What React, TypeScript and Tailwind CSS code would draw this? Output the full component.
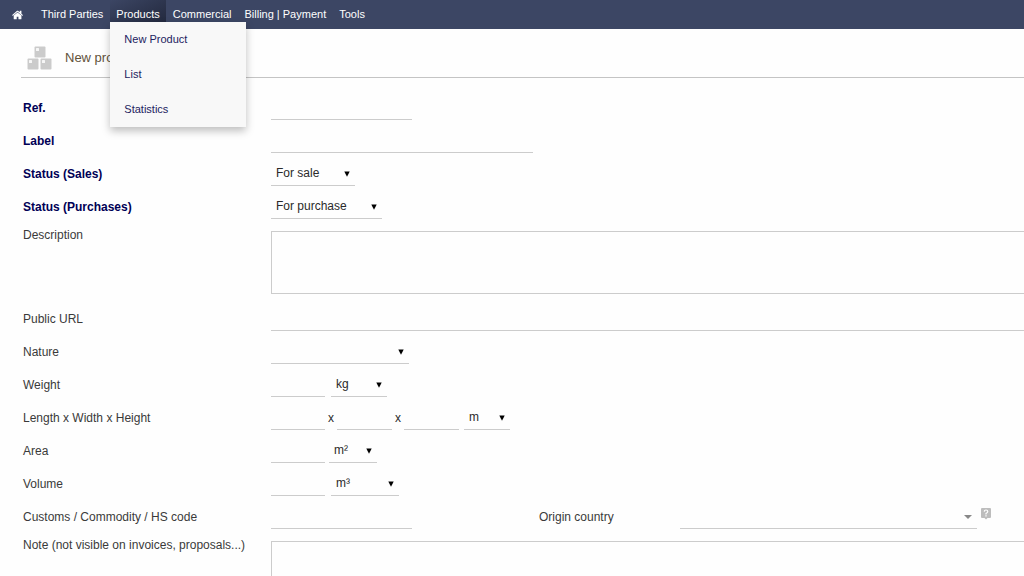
import React from 'react';
import { clsx } from 'clsx';

const NAV_ITEMS = ['Third Parties', 'Products', 'Commercial', 'Billing | Payment', 'Tools'];
const PRODUCT_MENU = ['New Product', 'List', 'Statistics'];

const LINE = 'h-[25px] border-b border-[#ccc] bg-transparent outline-none';

const HomeIcon = () => (
  <svg viewBox="0 0 1792 1792" className="h-3 w-3 fill-white" aria-hidden="true">
    <path d="M1408 992v480q0 26-19 45t-45 19h-384v-384h-256v384h-384q-26 0-45-19t-19-45v-480q0-1 .5-3t.5-3l575-474 575 474q1 2 1 6zm223-69l-62 74q-8 9-21 11h-3q-13 0-21-7l-692-577-692 577q-12 8-24 7-13-2-21-11l-62-74q-8-10-7-23.5t11-21.5l719-599q32-26 76-26t76 26l244 204v-195q0-14 9-23t23-9h192q14 0 23 9t9 23v408l219 182q10 8 11 21.5t-7 23.5z" />
  </svg>
);

const BoxesIcon = () => (
  <svg viewBox="0 0 26 24" className="h-6 w-[26px]" aria-hidden="true">
    {[[7, 0], [0, 12], [13, 12]].map(([x, y]) => (
      <g key={`${x}-${y}`}>
        <rect x={x + 0.5} y={y + 0.5} width="11" height="11" rx="1" fill="#cbcbcb" />
        <rect x={x + 2} y={y + 2} width="3" height="3" rx="0.5" fill="#f6f6f6" />
      </g>
    ))}
  </svg>
);

const HelpIcon = () => (
  <svg viewBox="0 0 10 12" className="h-3 w-[10px]" aria-hidden="true">
    <path d="M1 0h8q1 0 1 1v8q0 1-1 1H6.5L5 11.5 3.5 10H1Q0 10 0 9V1q0-1 1-1z" fill="#bdbdbd" />
    <path d="M3.2 3.6Q3.3 2 5 2t1.8 1.5Q6.8 4.5 5 5.6v.8" fill="none" stroke="#fff" strokeWidth="1.2" />
    <rect x="4.4" y="7.2" width="1.2" height="1.3" fill="#fff" />
  </svg>
);

const TopNav = () => (
  <header className="flex h-[29px] items-stretch bg-[#3c4664] pl-3 text-[11px] text-white">
    <a href="#" aria-label="Home" className="mr-[11px] flex items-center"><HomeIcon /></a>
    <nav className="flex gap-px">
      {NAV_ITEMS.map(item => {
        const active = item === 'Products';
        return (
          <div key={item} className="relative flex">
            <a
              href="#"
              className={clsx(
                'flex items-center px-[6px] whitespace-nowrap',
                active && 'bg-linear-to-br from-[#3c4664] to-[#20263a]'
              )}
            >
              {item}
            </a>
            {active && (
              <div className="absolute top-[22px] left-0 z-10 w-[136px] bg-[#f8f8f8] text-[#222260] shadow-[0_4px_8px_rgba(0,0,0,0.25)]">
                {PRODUCT_MENU.map(entry => (
                  <a key={entry} href="#" className="flex h-[35px] items-center pl-[14px]">{entry}</a>
                ))}
              </div>
            )}
          </div>
        );
      })}
    </nav>
  </header>
);

interface RowProps {
  id: string;
  label: string;
  required?: boolean;
  tall?: boolean;
  children: React.ReactNode;
}

const Row = ({ id, label, required, tall, children }: RowProps) => (
  <div className={clsx('flex', tall ? 'items-start' : 'h-[33px] items-center')}>
    <label
      htmlFor={id}
      className={clsx(
        'w-[248px] shrink-0 whitespace-nowrap',
        tall && 'pt-1',
        required ? 'font-bold text-[#000055]' : 'text-[#3a3a3a]'
      )}
    >
      {label}
    </label>
    {children}
  </div>
);

const TextField = ({ id, width, label }: { id: string; width: string; label?: string }) => (
  <input id={id} type="text" aria-label={label} className={clsx(LINE, width)} />
);

interface SelectProps {
  id: string;
  width: string;
  options: string[];
  label?: string;
  soft?: boolean;
}

const Select = ({ id, width, options, label, soft }: SelectProps) => (
  <div className={clsx('relative', width)}>
    <select id={id} aria-label={label} className={clsx(LINE, 'block w-full appearance-none pr-4 pl-[5px] text-[#2a2a2a]')}>
      {options.map(o => <option key={o}>{o}</option>)}
    </select>
    {soft ? (
      <svg viewBox="0 0 8 4" className="pointer-events-none absolute top-[11px] right-[5px] h-1 w-2 fill-[#888]"><path d="M0 0h8L4 4z" /></svg>
    ) : (
      <svg viewBox="0 0 6 6" className="pointer-events-none absolute top-[10px] right-[5px] h-[6px] w-[6px] fill-black"><path d="M0.3 0.5h5.4L3 5.8z" /></svg>
    )}
  </div>
);

const TextArea = ({ id }: { id: string }) => (
  <textarea id={id} className="mt-2 block h-[63px] min-w-0 flex-1 resize-none border-y border-l border-[#ccc] outline-none" />
);

const ProductForm = () => (
  <form className="pt-[13px] pl-[23px] text-xs">
    <Row id="ref" label="Ref." required><TextField id="ref" width="w-[141px]" /></Row>
    <Row id="label" label="Label" required><TextField id="label" width="w-[262px]" /></Row>
    <Row id="sales" label="Status (Sales)" required>
      <Select id="sales" width="w-[84px]" options={['For sale', 'Not for sale']} />
    </Row>
    <Row id="purchases" label="Status (Purchases)" required>
      <Select id="purchases" width="w-[111px]" options={['For purchase', 'Not for purchase']} />
    </Row>
    <div className="pb-2">
      <Row id="description" label="Description" tall><TextArea id="description" /></Row>
    </div>
    <Row id="url" label="Public URL"><TextField id="url" width="min-w-0 flex-1" /></Row>
    <Row id="nature" label="Nature">
      <Select id="nature" width="w-[138px]" options={['', 'Raw material', 'Manufactured product']} />
    </Row>
    <Row id="weight" label="Weight">
      <TextField id="weight" width="mr-[6px] w-[54px]" />
      <Select id="weight-unit" label="Weight unit" width="w-[56px]" options={['kg', 'g']} />
    </Row>
    <Row id="length" label="Length x Width x Height">
      <TextField id="length" width="w-[54px]" />
      <span className="w-3 text-center text-[#2a2a2a]">x</span>
      <TextField id="width" label="Width" width="w-[55px]" />
      <span className="w-3 text-center text-[#2a2a2a]">x</span>
      <TextField id="height" label="Height" width="mr-[5px] w-[55px]" />
      <Select id="size-unit" label="Size unit" width="w-[46px]" options={['m', 'cm']} />
    </Row>
    <Row id="area" label="Area">
      <TextField id="area" width="mr-1 w-[54px]" />
      <Select id="area-unit" label="Area unit" width="w-[48px]" options={['m²', 'cm²']} />
    </Row>
    <Row id="volume" label="Volume">
      <TextField id="volume" width="mr-[6px] w-[54px]" />
      <Select id="volume-unit" label="Volume unit" width="w-[68px]" options={['m³', 'L']} />
    </Row>
    <Row id="customs" label="Customs / Commodity / HS code">
      <div className="w-[268px] shrink-0"><TextField id="customs" width="w-[141px]" /></div>
      <label htmlFor="country" className="w-[141px] shrink-0 text-[#3a3a3a]">Origin country</label>
      <Select id="country" width="mr-1 min-w-0 flex-1" options={['', 'France', 'Spain']} soft />
      <button type="button" aria-label="Help" className="mr-[33px] mb-[6px]"><HelpIcon /></button>
    </Row>
    <Row id="note" label="Note (not visible on invoices, proposals...)" tall><TextArea id="note" /></Row>
  </form>
);

export default function App() {
  return (
    <div className="h-screen overflow-hidden bg-[#fefefe] font-['Liberation_Sans',Arial,sans-serif]">
      <TopNav />
      <main>
        <div className="ml-[21px] flex h-[49px] items-center gap-3 border-b border-[#c4c4c4] pt-[10px] pl-[6px]">
          <BoxesIcon />
          <h1 className="text-[13px] text-[#62523a]">New product</h1>
        </div>
        <ProductForm />
      </main>
    </div>
  );
}
